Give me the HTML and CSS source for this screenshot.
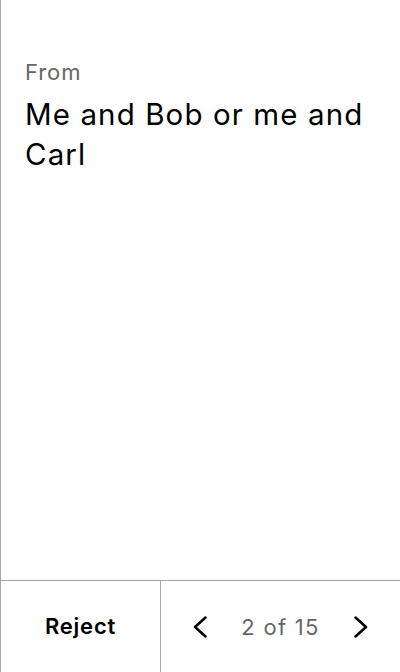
FILE: index.html
```html
<!DOCTYPE html>
<html>
<head>
<meta charset="utf-8">
<link rel="stylesheet" href="styles.css">
</head>
<body>
<div class="screen">
  <main class="content">
    <div class="label">From</div>
    <div class="title">Me and Bob or me and Carl</div>
  </main>
  <footer class="footer">
    <button class="reject">Reject</button>
    <div class="pager">
      <button class="nav" aria-label="Previous">
        <svg width="16" height="22" viewBox="0 0 16 22"><path d="M13.5 1.5 L3 11 L13.5 20.5" fill="none" stroke="#000" stroke-width="2.5" stroke-linecap="round" stroke-linejoin="round"/></svg>
      </button>
      <span class="count">2 of 15</span>
      <button class="nav" aria-label="Next">
        <svg width="16" height="22" viewBox="0 0 16 22"><path d="M2.5 1.5 L13 11 L2.5 20.5" fill="none" stroke="#000" stroke-width="2.5" stroke-linecap="round" stroke-linejoin="round"/></svg>
      </button>
    </div>
  </footer>
</div>
</body>
</html>
```
FILE: styles.css
```css
html, body {
  margin: 0;
  padding: 0;
  background: #fff;
}
body {
  font-family: Inter, "Noto Sans", sans-serif;
  color: #000;
}
.screen {
  width: 400px;
  height: 672px;
  box-sizing: border-box;
  border-left: 1px solid #a6a6a6;
  display: flex;
  flex-direction: column;
}
.content {
  flex: 1;
  padding: 58px 24px 0 24px;
}
.label {
  font-size: 22px;
  line-height: 28px;
  letter-spacing: 0.9px;
  color: #666;
}
.title {
  margin-top: 8px;
  font-size: 29.5px;
  line-height: 40px;
  letter-spacing: 1.1px;
  color: #000;
}
.footer {
  height: 91px;
  flex: none;
  border-top: 1px solid #a6a6a6;
  display: flex;
}
.reject {
  width: 160px;
  box-sizing: border-box;
  border: none;
  border-right: 1px solid #a6a6a6;
  background: none;
  font-family: inherit;
  font-size: 22px;
  font-weight: 600;
  letter-spacing: 0.8px;
  color: #000;
  padding: 0 0 2px 0;
}
.pager {
  flex: 1;
  display: flex;
  align-items: center;
  justify-content: space-between;
  padding: 0 31px 0 31px;
}
.nav {
  border: none;
  background: none;
  padding: 0;
  display: flex;
}
.count {
  font-size: 22px;
  letter-spacing: 1.3px;
  color: #666;
}
```
